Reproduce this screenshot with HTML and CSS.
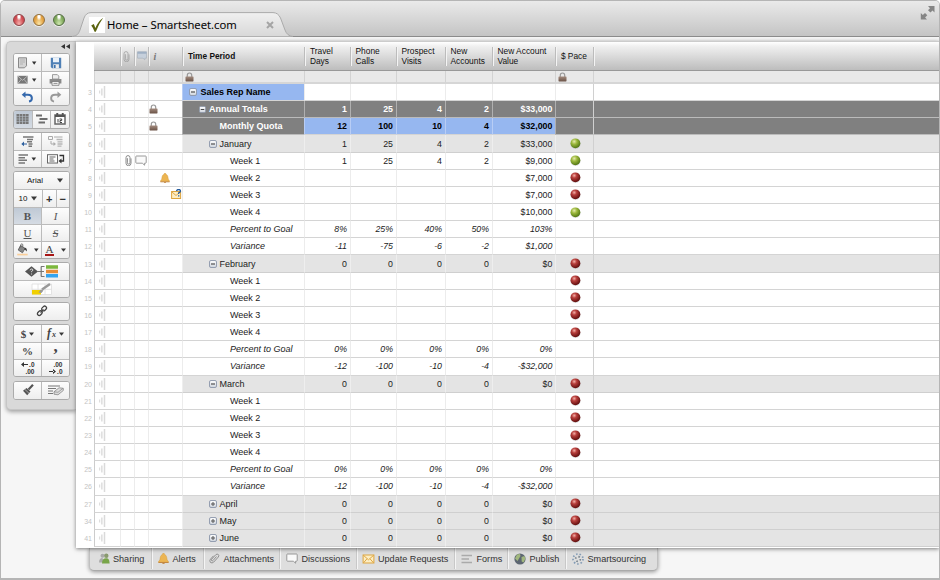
FILE: index.html
```html
<!DOCTYPE html>
<html lang="en">
<head>
<meta charset="utf-8">
<title>Home – Smartsheet.com</title>
<link rel="stylesheet" href="styles.css">
</head>
<body>
<svg class="defs" width="0" height="0">
  <defs>
    <radialGradient id="redG" cx="38%" cy="32%" r="70%"><stop offset="0" stop-color="#f3b0a8"/><stop offset=".35" stop-color="#b83f3c"/><stop offset="1" stop-color="#5e0c0c"/></radialGradient>
    <radialGradient id="greenG" cx="38%" cy="32%" r="70%"><stop offset="0" stop-color="#e6eaae"/><stop offset=".4" stop-color="#9cb83c"/><stop offset="1" stop-color="#4f7412"/></radialGradient>
    <linearGradient id="lockG" x1="0" y1="0" x2="0" y2="1"><stop offset="0" stop-color="#a58d80"/><stop offset="1" stop-color="#6b5347"/></linearGradient>
    <linearGradient id="boxG" x1="0" y1="0" x2="0" y2="1"><stop offset="0" stop-color="#fff"/><stop offset="1" stop-color="#cdd3dc"/></linearGradient>
    <symbol id="lock" viewBox="0 0 9 10"><path d="M2.3 5V3.2a2.2 2.2 0 0 1 4.4 0V5" fill="none" stroke="#999" stroke-width="1.2"/><rect x=".5" y="4.4" width="8" height="5" rx=".6" fill="url(#lockG)"/></symbol>
    <symbol id="clip" viewBox="0 0 8 11"><path d="M2.4 3.2v4.6a1.3 1.3 0 0 0 2.6 0V2.6a2 2 0 0 0-4 0v5.6a2.5 2.5 0 0 0 5 0V3.4" fill="none" stroke="#8a8a8a" stroke-width="1"/></symbol>
    <symbol id="bubble" viewBox="0 0 12 11"><path d="M1.500 1h9q.7 0 .7.7v5.800q0 .7-.7.7H9.600v2L7.300 8.200H1.500q-.7 0-.7-.7V1.700q0-.7.7-.7z" fill="#fafafa" stroke="#8e8e8e" stroke-width=".9"/></symbol>
    <symbol id="bell" viewBox="0 0 10 10"><path d="M5 .3c.8 0 1 .6 1 1C8 2 8 4.500 8.300 6c.2 1 1.400 1.500 1.400 2.400H.3C.3 7.500 1.500 7 1.700 6 2 4.500 2 2 4 1.300c0-.4.2-1 1-1z" fill="#ecb552" stroke="#d39a3c" stroke-width=".4"/><path d="M.4 8.400h9.200v.8H.4zM4 9h2v.8H4z" fill="#b9762a"/></symbol>
    <symbol id="mail" viewBox="0 0 12 10"><rect x=".6" y="1" width="10.800" height="8" fill="#fdeec4" stroke="#dda53f"/><path d="M.8 1.200 6 5.800l5.200-4.600M1 8.800l3.500-4M11 8.800l-3.500-4" fill="none" stroke="#dfa846" stroke-width="1"/></symbol>
    <symbol id="minus" viewBox="0 0 8 8"><rect x=".5" y=".5" width="7" height="7" rx="1.500" fill="url(#boxG)" stroke="#8b96aa" stroke-width=".9"/><path d="M2 4h4" stroke="#333" stroke-width="1"/></symbol>
    <symbol id="plus" viewBox="0 0 8 8"><rect x=".5" y=".5" width="7" height="7" rx="1.500" fill="url(#boxG)" stroke="#8b96aa" stroke-width=".9"/><path d="M2 4h4M4 2v4" stroke="#555" stroke-width="1"/></symbol>
    <symbol id="grip" viewBox="0 0 7 12"><path d="M.7 4.500v3" stroke="#ccc" stroke-width=".8"/><path d="M2.900 2.500v7" fill="none" stroke="#ccc" stroke-width="1"/><path d="M5.500 0v12" stroke="#dadada" stroke-width="1.500"/></symbol>
    <symbol id="red" viewBox="0 0 11 11"><circle cx="5.500" cy="6" r="5" fill="#999" opacity=".35"/><circle cx="5.400" cy="5.300" r="4.900" fill="url(#redG)"/></symbol>
    <symbol id="green" viewBox="0 0 11 11"><circle cx="5.500" cy="6" r="5" fill="#999" opacity=".35"/><circle cx="5.400" cy="5.300" r="4.900" fill="url(#greenG)"/></symbol>
    <symbol id="caret" viewBox="0 0 5 4"><path d="M0 .4h5L2.500 3.700z" fill="#3a3a3a"/></symbol>
  </defs>
</svg>
<div class="window">
  <header class="titlebar">
    <div class="lights"><i class="light close"></i><i class="light mini"></i><i class="light full"></i></div>
    <div class="tab">
      <svg class="tab-shape" viewBox="0 0 222 25" width="222" height="25"><defs><linearGradient id="tabG" x1="0" y1="0" x2="0" y2="1"><stop offset="0" stop-color="#f0f0f0"/><stop offset="1" stop-color="#d8d8d8"/></linearGradient></defs><path d="M0 24.500C5 24 6.500 22 8 18L12 6Q14 .6 19 .6H201Q206 .6 208.500 6L213 18Q215 24 221 24.500" fill="url(#tabG)" stroke="#aaa" stroke-width="1"/></svg>
      <div class="tab-content">
        <svg class="favicon" width="16" height="16" viewBox="0 0 16 16"><rect width="16" height="16" fill="#fff"/><path d="M2.200 8.600 4.800 7l1.600 4Q9 4.500 14.200.8 10 6.500 6.800 14.800H5.600Q4.300 11 2.200 8.600z" fill="#5b6410"/></svg>
        <span class="tab-title">Home – Smartsheet.com</span>
        <svg class="tab-x" width="8" height="8" viewBox="0 0 8 8"><path d="M1 1l6 6M7 1 1 7" stroke="#a5a5a5" stroke-width="2"/></svg>
      </div>
    </div>
    <svg class="expand" width="16" height="16" viewBox="0 0 16 16"><path d="M8 1h6.500v6.500l-2-2L10.500 7.500 8 5.200 10 3.200zM7 14.500H.8V8l2 2L5 8l2.300 2.300-2.200 2.200z" fill="#858585"/></svg>
  </header>
  <main class="body">
    <aside class="sidebar">
      <div class="collapse"><svg width="9" height="5" viewBox="0 0 9 5"><path d="M4 0v5L0 2.500zM9 0v5L5 2.500z" fill="#333"/></svg></div>
      <div class="group">
        <div class="row">
          <div class="btn"><svg width="22" height="12" viewBox="0 0 22 12"><path d="M1.500.8h8v8l-2 2h-6z" fill="#d4d4d4" stroke="#888"/><path d="M3 3h5M3 5h5M3 7h3" stroke="#aaa" stroke-width=".8"/><path d="M15 4.500h4.400L17.200 7.800z" fill="#333"/></svg></div>
          <div class="btn"><svg width="12" height="12" viewBox="0 0 12 12"><path d="M.8.8h10.400v10.400H2L.8 10z" fill="#4f80b6"/><path d="M3 .8h6v4.400H3z" fill="#e9f1f9"/><path d="M3.300 7.200h5.600v4H3.300z" fill="#eee"/><path d="M4 8h1.600v3H4z" fill="#3e73ad"/></svg></div>
        </div>
        <div class="row">
          <div class="btn"><svg width="22" height="12" viewBox="0 0 22 12"><rect x=".6" y="1.800" width="10" height="7.800" fill="#777"/><path d="M.8 2l4.800 4.300L10.400 2M1 9.300l3.300-4M10.400 9.300 7 5.300" fill="none" stroke="#c8c8c8" stroke-width=".8"/><path d="M15 4.500h4.400L17.200 7.800z" fill="#333"/></svg></div>
          <div class="btn"><svg width="13" height="12" viewBox="0 0 13 12"><path d="M3.500.6h4.800l1.500 1.500V5H3.500z" fill="#eee" stroke="#888" stroke-width=".8"/><path d="M.6 5h11.800v4.500H.6z" fill="#8a8a8a"/><path d="M3 7.500h7v3.800H3z" fill="#f5f5f5" stroke="#777" stroke-width=".8"/><path d="M4.500 9.400h4" stroke="#777" stroke-width=".8"/></svg></div>
        </div>
        <div class="row">
          <div class="btn"><svg width="13" height="12" viewBox="0 0 13 12"><path d="M2.500 3.800H7c5 0 5 6 1 6.800" fill="none" stroke="#3569ad" stroke-width="2"/><path d="M4.500.5v6.600L.7 3.800z" fill="#3569ad"/></svg></div>
          <div class="btn"><svg width="13" height="12" viewBox="0 0 13 12"><path d="M10.500 3.800H6c-5 0-5 6-1 6.800" fill="none" stroke="#999" stroke-width="1.900"/><path d="M8.500.5v6.600l3.800-3.300z" fill="#999"/></svg></div>
        </div>
      </div>
      <div class="group">
        <div class="row">
          <div class="btn on"><svg width="13" height="10" viewBox="0 0 13 10"><path d="M.5 0h2.700v10H.5zM3.700 0h2.700v10H3.700zM6.900 0h2.700v10H6.900zM10 0h2.600v10H10z" fill="#777"/><path d="M0 2.500h13M0 5h13M0 7.500h13" stroke="#b7c0ca" stroke-width=".5"/></svg></div>
          <div class="btn"><svg width="12" height="10" viewBox="0 0 12 10"><path d="M0 1.500h6M3.500 5h8M2.500 8.500h6.500" stroke="#6d6d6d" stroke-width="2.100"/></svg></div>
          <div class="btn"><svg width="12" height="12" viewBox="0 0 12 12"><rect x="1" y="2" width="10" height="9" fill="#fff" stroke="#666" stroke-width="1.500"/><path d="M1 2h10v2H1zM2.300 0h1.900v2H2.300zM7.800 0h1.900v2H7.800z" fill="#555"/><path d="M4 6v3.500M5.500 6h2.200v1.500H6v2h2" fill="none" stroke="#444" stroke-width="1"/></svg></div>
        </div>
      </div>
      <div class="group">
        <div class="row">
          <div class="btn"><svg width="13" height="11" viewBox="0 0 13 11"><path d="M2 1h10.500M6 3.500h6M6 5.700h5M7.500 8h4M7.500 10.200h3.500" stroke="#777" stroke-width="1.400"/><path d="M3 5.500v4.800L.3 8zM2 7.400h4v1.200H2z" fill="#2c5f9e"/></svg></div>
          <div class="btn"><svg width="15" height="11" viewBox="0 0 15 11"><path d="M.5.5h4v3h-4zM6 1h8.500" fill="none" stroke="#aaa"/><path d="M8.500 3.500h6M9.500 5.800h5M9.500 8h5M9.500 10.200h4" stroke="#b5b5b5" stroke-width="1.300"/><path d="M3 5v3h3" fill="none" stroke="#aaa"/><path d="M5.500 6v4L8 8z" fill="#aaa"/></svg></div>
        </div>
        <div class="row">
          <div class="btn"><svg width="19" height="10" viewBox="0 0 19 10"><path d="M.5 1H10M.5 3.700H7M.5 6.300h8.500M.5 9H7" stroke="#777" stroke-width="1.500"/><path d="M13.500 3.500h4.600L15.800 6.800z" fill="#333"/></svg></div>
          <div class="btn"><svg width="18" height="10" viewBox="0 0 18 10"><rect x=".5" y=".7" width="10" height="8.300" fill="#fff" stroke="#666"/><path d="M2.500 3h6M2.500 5h4M2.500 7h5" stroke="#666" stroke-width="1.100"/><path d="M12.500 1.500h4v5.500H13" fill="none" stroke="#333" stroke-width="1.300"/><path d="M14.500 4.500v5l-3-2.500z" fill="#333"/></svg></div>
        </div>
      </div>
      <div class="group">
        <div class="row"><div class="btn font"><span>Arial</span><svg width="6" height="5"><use href="#caret"/></svg></div></div>
        <div class="row"><div class="btn size"><span>10</span><svg width="6" height="5"><use href="#caret"/></svg></div><div class="btn step">+</div><div class="btn step">−</div></div>
        <div class="row"><div class="btn on serif b">B</div><div class="btn serif i">I</div></div>
        <div class="row"><div class="btn serif u">U</div><div class="btn serif s">S</div></div>
        <div class="row">
          <div class="btn"><svg width="22" height="13" viewBox="0 0 22 13"><path d="M3.500 2.500 8 5.500 5.500 9.800 1.200 7z" fill="#888" stroke="#555" stroke-width=".8"/><path d="M3.800 4.500V1.500q1.200-1.500 2 0V4" fill="none" stroke="#555" stroke-width=".8"/><path d="M7.500 4.500q3 .5 2.300 4-1-1.500-2.500-1.800z" fill="#444"/><path d="M.2 10.800h10.500v1.600H.2z" fill="#fbcf9a"/><path d="M17 5.500h4.600L19.300 8.800z" fill="#333"/></svg></div>
          <div class="btn color"><span>A</span><svg width="5" height="4"><use href="#caret"/></svg></div>
        </div>
      </div>
      <div class="group">
        <div class="row"><div class="btn"><svg width="35" height="13" viewBox="0 0 35 13"><path d="M7.500 1.200 14 6.500 7.500 11.800 1 6.500z" fill="#555"/><path d="M13 6.500h7M17 1.500h3.500M17 11.500h3.500M17.200 1.500v10" fill="none" stroke="#777" stroke-width="1.200"/><path d="M6.200 5.300q.2-1.300 1.400-1.300 1.400 0 1.200 1.200-.2.800-1.200 1.200v.8M7.600 8.500v1" fill="none" stroke="#eee" stroke-width=".9"/><path d="M22 .3h12v3.500H22z" fill="#7cb73d"/><path d="M22 4.700h12v3.500H22z" fill="#e98d35"/><path d="M22 9h12v3.500H22z" fill="#35a4ee"/></svg></div></div>
        <div class="row"><div class="btn"><svg width="22" height="14" viewBox="0 0 22 14"><path d="M1 2h19.500v10.500H1zM1 7.300h19.500M7 2v10.500M14 2v10.500" fill="#fff" stroke="#ddd" stroke-width=".8"/><path d="M1 8h9v4.500H1z" fill="#f1d000"/><path d="M7.500 10.500 10 7.500l2.500 1L10.500 11z" fill="#999"/><path d="M11 7.500 19 2" stroke="#999" stroke-width="2.500"/></svg></div></div>
      </div>
      <div class="group"><div class="row"><div class="btn"><svg width="12" height="12" viewBox="0 0 12 12"><g fill="none" stroke="#444" stroke-width="1.300"><rect x="5.500" y="1.800" width="5.200" height="3.600" rx="1.700" transform="rotate(-45 8 3.600)"/><rect x="1.200" y="6.300" width="5.200" height="3.600" rx="1.700" transform="rotate(-45 3.800 8.100)"/><path d="m4.500 7.500 3-3"/></g></svg></div></div></div>
      <div class="group">
        <div class="row"><div class="btn sym"><b>$</b><svg width="5" height="4"><use href="#caret"/></svg></div><div class="btn sym"><span class="fx"><b>f</b><small>x</small></span><svg width="5" height="4"><use href="#caret"/></svg></div></div>
        <div class="row"><div class="btn sym"><b>%</b></div><div class="btn sym"><b class="comma">,</b></div></div>
        <div class="row">
          <div class="btn dec"><span><svg width="8" height="5" viewBox="0 0 8 5"><path d="M3 0v5L0 2.500zM2 2h5v1H2z" fill="#333"/></svg>.0</span><span>.00</span></div>
          <div class="btn dec"><span>.00</span><span><svg width="8" height="5" viewBox="0 0 8 5"><path d="M4 0v5L7 2.500zM0 2h5v1H0z" fill="#333"/></svg>.0</span></div>
        </div>
      </div>
      <div class="group"><div class="row">
        <div class="btn"><svg width="12" height="12" viewBox="0 0 12 12"><path d="M11 .8 6.500 5.500" stroke="#555" stroke-width="2.200"/><path d="M1 6.800 4.500 4l4 3.500-3.300 3.800z" fill="#555"/><path d="m3 5.500 4 3.800" stroke="#ccc" stroke-width=".7"/></svg></div>
        <div class="btn"><svg width="16" height="11" viewBox="0 0 16 11"><path d="M0 1h12M0 3.500h8M0 6h5M0 8.500h5" stroke="#777" stroke-width="1.200"/><path d="m6 6.800 5-4 4.300.5v2.200L10 9.800l-4-.6z" fill="#ddd" stroke="#888" stroke-width=".8"/><path d="m6 6.800 4 .5 5-4" fill="none" stroke="#888" stroke-width=".7"/></svg></div>
      </div></div>
    </aside>
    <section class="main">
      <div class="sheet">
        <div class="line head">
          <div class="num"></div><div class="c"></div>
          <div class="c ic faded"><svg width="8" height="11"><use href="#clip"/></svg></div>
          <div class="c ic"><svg width="10" height="10" viewBox="0 0 10 10"><path d="M.5.8h9v6.400H7.800v1.600L6 7.200H.5z" fill="#c6d0dc" stroke="#a9b2bc" stroke-width=".7"/><path d="M.5.8h9v2h-9z" fill="#9fb0c4"/></svg></div>
          <div class="c info">i</div>
          <div class="c tp">Time Period</div>
          <div class="c">Travel<br>Days</div><div class="c">Phone<br>Calls</div><div class="c">Prospect<br>Visits</div><div class="c">New<br>Accounts</div><div class="c">New Account<br>Value</div><div class="c">$ Pace</div><div class="c"></div>
        </div>
        <div class="line locks">
          <div class="num"></div><div class="c"></div><div class="c"></div><div class="c"></div><div class="c"></div>
          <div class="c"><svg width="9" height="10"><use href="#lock"/></svg></div>
          <div class="c"></div><div class="c"></div><div class="c"></div><div class="c"></div><div class="c"></div>
          <div class="c"><svg width="9" height="10"><use href="#lock"/></svg></div><div class="c"></div>
        </div>
        <div class="rows" id="rows"></div>
      </div>
      <nav class="bottom">
        <div class="item w1"><svg width="12" height="11" viewBox="0 0 12 11"><circle cx="4.500" cy="2.700" r="2" fill="#aaa"/><path d="M1 9.500q0-4.500 3.500-4.500L6 9.500z" fill="#aaa"/><circle cx="8.300" cy="2.800" r="2.200" fill="#8a9a70"/><path d="M4 10.500Q4 5.300 8.300 5.300q3.300 0 3.300 5.200z" fill="#78a548"/></svg>Sharing</div>
        <div class="item w2"><svg width="11" height="11"><use href="#bell"/></svg>Alerts</div>
        <div class="item w3"><svg width="11" height="11" viewBox="0 0 11 11"><path d="M7.500 3.500 4 7.500q-.8.800-1.400.1-.6-.6.100-1.400L6.800 1.700q1.300-1.200 2.500-.2 1.100 1.200 0 2.500L4.800 9Q3 10.800 1.300 9.300.2 7.700 1.500 6.100L4.500 2.800" fill="none" stroke="#888" stroke-width=".9"/></svg>Attachments</div>
        <div class="item w4"><svg width="12" height="11"><use href="#bubble"/></svg>Discussions</div>
        <div class="item w5"><svg width="13" height="10"><use href="#mail"/></svg>Update Requests</div>
        <div class="item w6"><svg width="12" height="10" viewBox="0 0 12 10"><path d="M.5 1.500H11M.5 5H8M.5 8.500H11" stroke="#aaa" stroke-width="1.700"/></svg>Forms</div>
        <div class="item w7"><svg width="12" height="12" viewBox="0 0 12 12"><circle cx="6" cy="6" r="5.600" fill="#5d6672"/><path d="M3 1.500 6 1l.5 2L5 5.500 3.500 8 1 5.500zM7.500 4l3-1 .8 3-1.800 3.500-1.800-1z" fill="#a2b87e"/></svg>Publish</div>
        <div class="item w8"><svg width="12" height="12" viewBox="0 0 12 12"><g fill="none" stroke="#829bb5" stroke-width="1.700" stroke-dasharray="1.500 2"><circle cx="6" cy="6" r="5"/><circle cx="6" cy="6" r="2.400" stroke="#7c8790"/></g></svg>Smartsourcing</div>
      </nav>
    </section>
  </main>
</div>
<script src="app.js"></script>
</body>
</html>
```
FILE: styles.css
```css
* { box-sizing: border-box; }
body { margin: 0; width: 940px; height: 580px; overflow: hidden; background: #fff; font-family: "Liberation Sans", Arial, sans-serif; color: #222; }
svg { display: block; flex: none; }
.defs { position: absolute; }
.window { width: 940px; height: 580px; border: 1px solid #b5b5b5; border-width: 1px 1px 2px 1px; border-radius: 5px 5px 0 0; overflow: hidden; background: #f6f6f6; }
.titlebar { display: flex; height: 36px; background: linear-gradient(#eaeaea, #c4c4c4); border-bottom: 1px solid #8c8c8c; }
.lights { display: flex; gap: 8px; padding: 13px 0 0 12px; width: 71px; }
.light { width: 12px; height: 12px; border-radius: 50%; border: 1px solid #777; box-shadow: 0 1px 0 #eee; }
.close { background: radial-gradient(ellipse at 50% 15%, #fff 0 12%, transparent 35%), radial-gradient(at 50% 90%, #f6b0ac, #cf4a50 65%); border-color: #8d4246; }
.mini { background: radial-gradient(ellipse at 50% 15%, #fff 0 12%, transparent 35%), radial-gradient(at 50% 90%, #fbe6a8, #e2a040 65%); border-color: #93703c; }
.full { background: radial-gradient(ellipse at 50% 15%, #fff 0 12%, transparent 35%), radial-gradient(at 50% 90%, #cfe8b0, #7fa85a 65%); border-color: #526b42; }
.tab { display: grid; margin-top: 11px; width: 222px; height: 25px; }
.tab-shape, .tab-content { grid-area: 1 / 1; }
.tab-content { display: flex; align-items: flex-start; padding: 5px 0 0 17px; }
.tab-title { font: 11.3px/14px "Open Sans", sans-serif; color: #000; margin: 1px 0 0 2px; width: 159px; white-space: nowrap; -webkit-text-stroke: .1px #000; }
.tab-x { margin-top: 4px; }
.expand { margin: 4px 3px 0 auto; }
.body { display: flex; align-items: flex-start; padding: 4px 0 0 5px; }

.sidebar { width: 70px; height: 369px; background: #d9d9d9; border: 1px solid #c6c6c6; border-right: 0; border-radius: 5px 0 0 5px; box-shadow: 0 2px 4px rgba(0,0,0,.35); padding: 0 6px; display: flex; flex-direction: column; gap: 3.400px; }
.collapse { height: 7.600px; padding-top: 2px; display: flex; justify-content: flex-end; }
.group { border: 1px solid #ababab; border-radius: 3px; background: linear-gradient(#fff, #ececec); overflow: hidden; flex: none; width: 57px; }
.row { display: flex; height: 17.050px; }
.row + .row { border-top: 1px solid #bbb; }
.btn { flex: 1 1 0; min-width: 0; display: flex; align-items: center; justify-content: center; background: linear-gradient(#fdfdfd, #eee); color: #333; }
.btn + .btn { border-left: 1px solid #bbb; }
.on { background: linear-gradient(#bfc9d5, #d5dbe3); }
.font { font-size: 8px; padding-left: 7px; gap: 14px; color: #111; }
.size { flex: 0 0 28px; font-size: 8px; gap: 4px; color: #111; }
.step { font-size: 11px; font-weight: bold; }
.serif { font: 11px "Liberation Serif", serif; color: #555; }
.b { font-weight: bold; }
.i { font-style: italic; }
.u { text-decoration: underline; }
.s { text-decoration: line-through; font-style: italic; }
.color { gap: 7px; }
.color span { font: 11px/10px "Liberation Serif", serif; color: #444; border-bottom: 2px solid #a81616; padding: 0 1px; }
.sym { font: 11px "Liberation Serif", serif; gap: 3px; color: #444; }
.fx { display: flex; align-items: flex-end; gap: 1px; font-style: italic; font-size: 12px; line-height: 13px; }
.fx small { font-size: 8px; line-height: 10px; font-weight: bold; }
.comma { font-size: 17px; line-height: 8px; margin-top: -8px; }
.dec { flex-direction: column; align-items: center; font: bold 6.500px/7.500px "Liberation Sans", sans-serif; }
.dec span { display: flex; align-items: center; width: 14px; height: 7.500px; justify-content: flex-end; }

.main { width: 864px; }
.sheet { height: 507px; background: #fff; border-top: 1px solid #ccc; box-shadow: 0 1px 4px rgba(0,0,0,.5); position: relative; }
.line { display: grid; grid-template-columns: 18px 26px 14px 14px 34.400px 122px 45.600px 46px 49px 47px 63.400px 38px 1fr; }
.c { min-width: 0; white-space: nowrap; }
.head { height: 29px; font-size: 8.400px; line-height: 10.300px; color: #111; }
.head .c { display: flex; align-items: center; padding: 0 0 0 5.500px; background: linear-gradient(#fff, #f0f0f0 15%, #bdbdbd); border-bottom: 1px solid #999; }
.head .c:nth-child(n+3)::before { content: ""; flex: none; width: 1px; height: 19px; background: #bcbcbc; box-shadow: 1px 0 #f4f4f4; margin-left: -5.500px; margin-right: 4.500px; }
.head .c.ic::before { margin-right: 2px; }
.faded svg { opacity: .6; }
.head .info { font: italic bold 10px "Liberation Serif", serif; color: #777; }
.head .tp { font-weight: bold; font-size: 8.300px; }
.locks { height: 13px; }
.locks .c { background: #e9e9e9; border-bottom: 2px solid #d6d6d6; border-left: 1px solid #d3d3d3; padding: 1px 0 0 2px; }
.rows { height: 463px; display: grid; grid-template-rows: repeat(27, 1fr); font-size: 9px; }
.rows .line { min-height: 0; }
.num { font-size: 7px; color: #c4c4c4; text-align: right; padding-right: 2px; display: flex; align-items: center; justify-content: flex-end; }
.rows .c { border-bottom: 1px solid #d4d4d4; border-left: 1px solid #ececec; display: flex; align-items: center; min-height: 0; color: #222; }
.rows .c:nth-child(2) { border-left-color: #ccc; padding-left: 4px; }
.rows .v { justify-content: flex-end; padding-right: 3px; font-size: 8.800px; }
.rows .gr { background: #e4e4e4; border-left-color: #eee; border-bottom-color: #cfcfcf; }
.rows .dk { background: #808080; color: #fff; font-weight: bold; border-left-color: #b0b0b0; border-bottom-color: #bbb; }
.rows .bl { background: #96b7f0; color: #000; font-weight: bold; border-left-color: #b8cdf5; }
.rows .it { font-style: italic; }
.rows .p { justify-content: center; padding-left: 2px; }
.rows .last { border-left-color: #d0d0d0; }
.l0 { padding-left: 6px; gap: 3px; }
.l1 { padding-left: 16px; gap: 2.500px; }
.l2 { padding-left: 36px; }
.l3 { padding-left: 26px; gap: 2px; }
.l4 { padding-left: 46.500px; }
.ca { padding-left: 4px; }
.cb { padding-left: 0; }

.bottom { display: flex; margin-left: 13px; width: 569px; height: 23px; background: #dedede; border: 1px solid #c0c0c0; border-top: 0; border-bottom-color: #aaa; border-radius: 0 0 5px 5px; box-shadow: 0 1px 4px rgba(0,0,0,.4); font-size: 9.100px; color: #333; padding-bottom: 1px; }
.item { display: flex; align-items: center; gap: 3.500px; padding-left: 5px; white-space: nowrap; flex: none; }
.item + .item { border-left: 1px solid #f5f5f5; box-shadow: -1px 0 #c8c8c8; }
.w1 { width: 62px; padding-left: 7.500px; }
.w2 { width: 52px; }
.w3 { width: 76px; padding-left: 4px; }
.w4 { width: 77px; }
.w5 { width: 98px; padding-left: 4px; gap: 3px; }
.w6 { width: 53px; }
.w7 { width: 58px; }
.w8 { width: 91px; }
```
FILE: app.js
```js
const use = (id, w, h) => `<svg width="${w}" height="${h}"><use href="#${id}"/></svg>`;
const zero = ["0", "0", "0", "0", "$0"];
const none = ["", "", "", "", ""];
const pct0 = ["0%", "0%", "0%", "0%", "0%"];
const var0 = ["-12", "-100", "-10", "-4", "-$32,000"];

// [row number, label, kind, values, pace]
const data = [
  [3, "Sales Rep Name", "rep", none],
  [4, "Annual Totals", "annual", ["1", "25", "4", "2", "$33,000"]],
  [5, "Monthly Quota", "quota", ["12", "100", "10", "4", "$32,000"]],
  [6, "January", "month", ["1", "25", "4", "2", "$33,000"], "green"],
  [7, "Week 1", "week", ["1", "25", "4", "2", "$9,000"], "green"],
  [8, "Week 2", "week", ["", "", "", "", "$7,000"], "red"],
  [9, "Week 3", "week", ["", "", "", "", "$7,000"], "red"],
  [10, "Week 4", "week", ["", "", "", "", "$10,000"], "green"],
  [11, "Percent to Goal", "sum", ["8%", "25%", "40%", "50%", "103%"]],
  [12, "Variance", "sum", ["-11", "-75", "-6", "-2", "$1,000"]],
];
[["February", 13], ["March", 20]].forEach(([name, n]) => {
  data.push([n, name, "month", zero, "red"]);
  for (let i = 1; i <= 4; i++) data.push([n + i, "Week " + i, "week", none, "red"]);
  data.push([n + 5, "Percent to Goal", "sum", pct0]);
  data.push([n + 6, "Variance", "sum", var0]);
});
[["April", 27], ["May", 34], ["June", 41]].forEach(([name, n]) => data.push([n, name, "closed", zero, "red"]));

const kinds = {
  rep: { label: "bl l0", cell: "", rest: "", icon: use("minus", 8, 8) },
  annual: { label: "dk l1", cell: "dk", rest: "dk", icon: use("minus", 7, 7) },
  quota: { label: "dk l2", cell: "bl", rest: "dk", icon: "" },
  month: { label: "gr l3", cell: "gr", rest: "gr", icon: use("minus", 8, 8) },
  closed: { label: "gr l3", cell: "gr", rest: "gr", icon: use("plus", 8, 8) },
  week: { label: "l4", cell: "", rest: "", icon: "" },
  sum: { label: "l4 it", cell: "it", rest: "", icon: "" },
};
const marks = {
  4: ["", "", use("lock", 9, 10)], 5: ["", "", use("lock", 9, 10)],
  7: [use("clip", 8, 11), use("bubble", 12, 11), ""],
  8: ["", "", use("bell", 10, 10)],
  9: ["", "", `<svg width="11" height="11" viewBox="0 0 11 11"><rect x=".6" y="2.500" width="9" height="7" fill="#fdeec4" stroke="#dda53f"/><path d="M1 3l4 3.500L9 3" fill="none" stroke="#dfa846"/><path d="M5.500 2q.4-1.500 2-1.500 2.200 0 1.900 1.900-.3 1-1.700 1.500v1M7.700 6.200v1.300" fill="none" stroke="#235a9c" stroke-width="1.300"/></svg>`],
};
const markPad = { 4: 0, 5: 0, 8: 11, 9: 22 };

document.getElementById("rows").innerHTML = data.map(([n, label, kind, vals, pace]) => {
  const k = kinds[kind], m = marks[n] || ["", "", ""];
  return `<div class="line"><div class="num">${n}</div><div class="c">${use("grip", 7, 12)}</div>` +
    `<div class="c ca">${m[0]}</div><div class="c cb">${m[1]}</div><div class="c" style="padding-left:${markPad[n] || 0}px">${m[2]}</div>` +
    `<div class="c ${k.label}">${k.icon}<span>${label}</span></div>` +
    vals.map(v => `<div class="c v ${k.cell}">${v}</div>`).join("") +
    `<div class="c p ${k.rest}">${pace ? use(pace, 11, 11) : ""}</div><div class="c last ${k.rest}"></div></div>`;
}).join("");
```
